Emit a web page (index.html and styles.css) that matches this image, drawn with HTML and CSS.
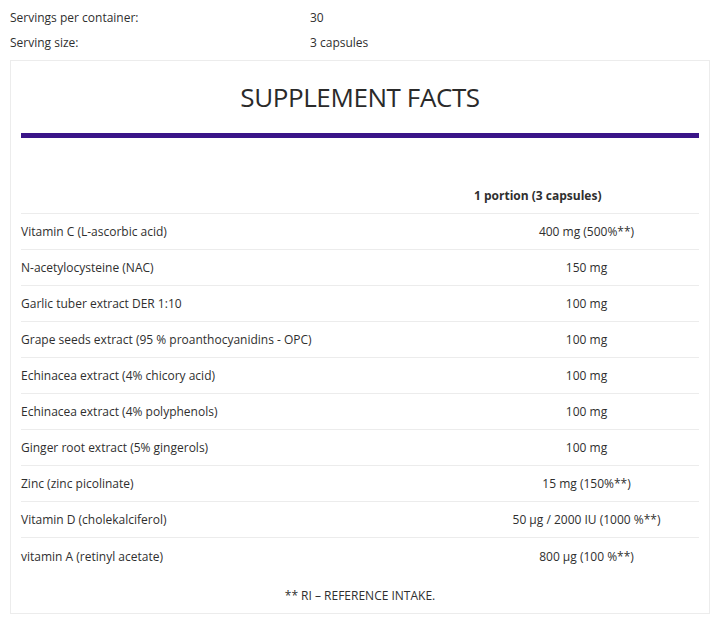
FILE: index.html
```html
<!DOCTYPE html>
<html>
<head>
<meta charset="utf-8">
<link rel="stylesheet" href="styles.css">
</head>
<body>
<div class="info">
  <div class="info-row"><span class="info-label">Servings per container:</span><span>30</span></div>
  <div class="info-row"><span class="info-label">Serving size:</span><span>3 capsules</span></div>
</div>
<div class="facts">
  <h1 class="title">SUPPLEMENT FACTS</h1>
  <div class="bar"></div>
  <div class="table">
    <div class="row head"><span></span><span class="portion">1 portion (3 capsules)</span></div>
    <div class="row"><span>Vitamin C (L-ascorbic acid)</span><span class="val">400 mg (500%**)</span></div>
    <div class="row"><span>N-acetylocysteine (NAC)</span><span class="val">150 mg</span></div>
    <div class="row"><span>Garlic tuber extract DER 1:10</span><span class="val">100 mg</span></div>
    <div class="row"><span>Grape seeds extract (95 % proanthocyanidins - OPC)</span><span class="val">100 mg</span></div>
    <div class="row"><span>Echinacea extract (4% chicory acid)</span><span class="val">100 mg</span></div>
    <div class="row"><span>Echinacea extract (4% polyphenols)</span><span class="val">100 mg</span></div>
    <div class="row"><span>Ginger root extract (5% gingerols)</span><span class="val">100 mg</span></div>
    <div class="row"><span>Zinc (zinc picolinate)</span><span class="val">15 mg (150%**)</span></div>
    <div class="row"><span>Vitamin D (cholekalciferol)</span><span class="val">50 µg / 2000 IU (1000 %**)</span></div>
    <div class="row last"><span>vitamin A (retinyl acetate)</span><span class="val">800 µg (100 %**)</span></div>
  </div>
  <p class="note">** RI – REFERENCE INTAKE.</p>
</div>
</body>
</html>
```
FILE: styles.css
```css
html, body {
  margin: 0;
  padding: 0;
  background: #fff;
}
body {
  font-family: "Open Sans", "DejaVu Sans", sans-serif;
  font-size: 12px;
  color: #2f2f2f;
  padding: 5px 10px 0 10px;
}
.info-row {
  display: flex;
  height: 25px;
  align-items: center;
}
.info-label {
  width: 300px;
}
.facts {
  margin-top: 5px;
  width: 678px;
  border: 1px solid #ececec;
  padding: 0 10px 8px 10px;
}
.title {
  margin: 21px 0 0 0;
  font-size: 26px;
  font-weight: 400;
  letter-spacing: -0.4px;
  line-height: 31px;
  text-align: center;
  color: #2a2a2a;
}
.bar {
  margin-top: 20px;
  height: 5px;
  background: #3a1488;
}
.table {
  margin-top: 40px;
}
.row {
  display: grid;
  grid-template-columns: 453px 225px;
  height: 35px;
  align-items: center;
  border-bottom: 1px solid #ececec;
}
.row.last {
  border-bottom: none;
  height: 36px;
}
.portion {
  font-weight: 700;
}
.val {
  text-align: center;
}
.note {
  margin: 13px 0 0 0;
  line-height: 18px;
  text-align: center;
}
```
